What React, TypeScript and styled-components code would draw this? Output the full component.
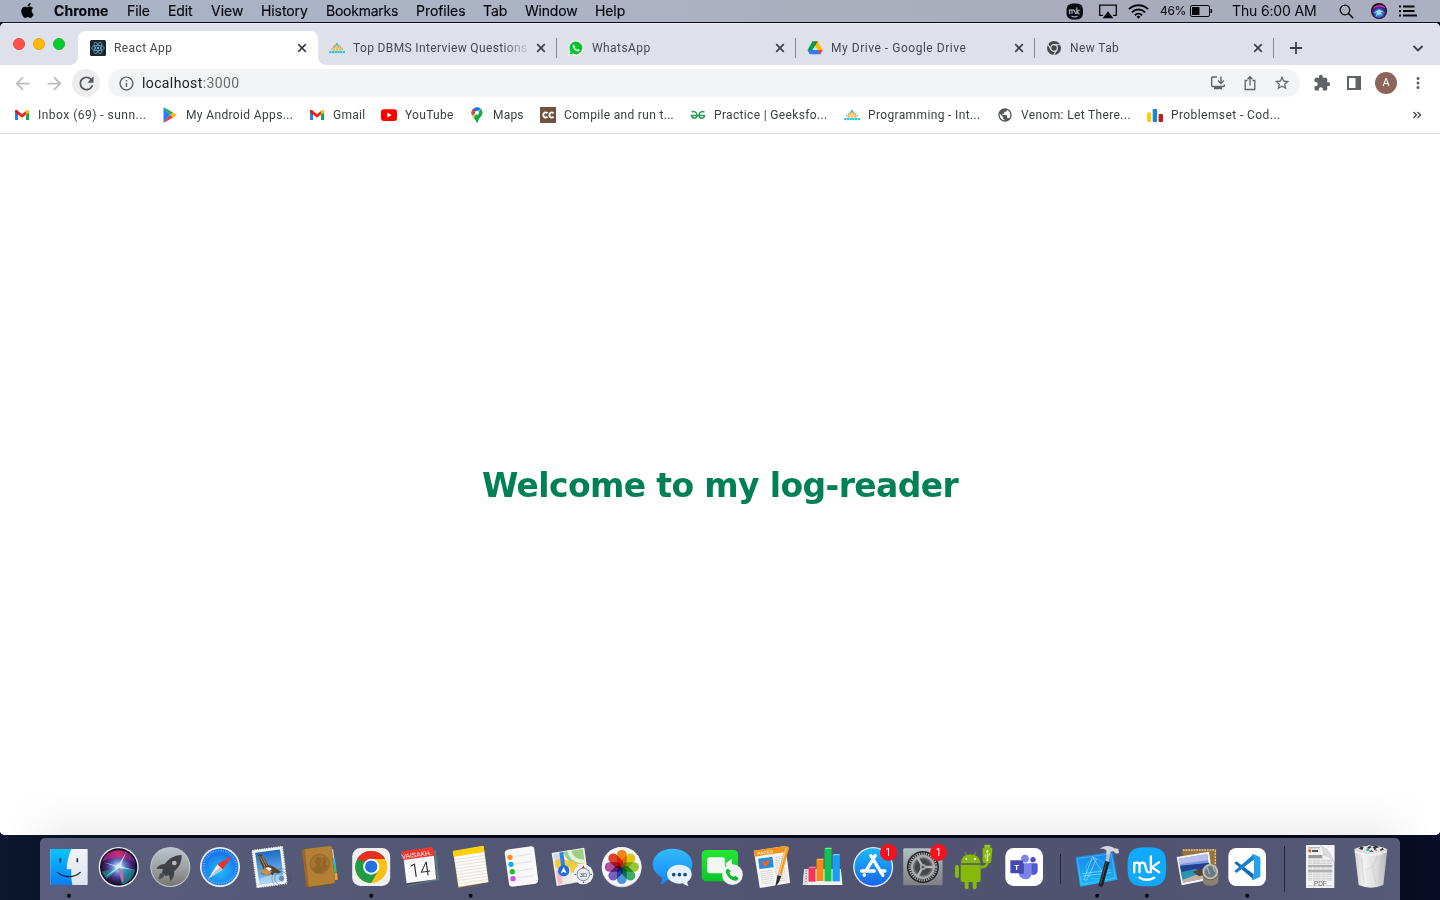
import React from "react";
import styled, { createGlobalStyle } from "styled-components";
import {
  MdArrowBack,
  MdArrowForward,
  MdRefresh,
  MdInfoOutline,
  MdExtension,
  MdStarBorder,
  MdMoreVert,
  MdPublic,
} from "react-icons/md";
import { FaApple } from "react-icons/fa";

const GlobalStyle = createGlobalStyle`
  * { box-sizing: border-box; }
  body { margin: 0; background: #070d1f; overflow: hidden; }
`;

const uiFont = `Roboto, "Liberation Sans", sans-serif`;
const menuFont = `Inter, "Liberation Sans", sans-serif`;

const Desktop = styled.div`
  width: 1440px;
  height: 900px;
  display: flex;
  flex-direction: column;
  background: linear-gradient(90deg, #0c1830 0, #050a1a 10%, #050a18 90%, #070d26 100%);
`;

/* ---------- menu bar ---------- */

const MenuBar = styled.header`
  flex: none;
  height: 22px;
  margin-bottom: 1px;
  display: flex;
  align-items: center;
  padding-left: 20px;
  background: linear-gradient(90deg, #a9b2c5 0%, #abb3c5 40%, #abafbd 60%, #a8acba 80%, #abb1c2 100%);
  font-family: ${menuFont};
  font-size: 14px;
  line-height: 22px;
  color: #05070c;
  white-space: nowrap;
`;

const AppleMark = styled.span`
  width: 34px;
  height: 22px;
  display: flex;
  align-items: center;
  svg { width: 15px; height: 17px; margin-top: -2px; }
`;

const MenuItem = styled.span<{ $w: number; $bold?: boolean; $ls?: number }>`
  width: ${(p) => p.$w}px;
  font-weight: ${(p) => (p.$bold ? 700 : 400)};
  letter-spacing: ${(p) => p.$ls ?? -0.1}px;
  -webkit-text-stroke: 0.15px #05070c;
`;

const StatusArea = styled.div`
  margin-left: auto;
  width: 374px;
  height: 22px;
  display: flex;
  align-items: center;
`;

const StatusSlot = styled.span<{ $w: number; $size?: number; $ls?: number }>`
  width: ${(p) => p.$w}px;
  height: 22px;
  display: flex;
  align-items: center;
  font-size: ${(p) => p.$size ?? 14}px;
  letter-spacing: ${(p) => p.$ls ?? 0}px;
  svg { flex: none; display: block; }
`;

/* ---------- browser window ---------- */

const Window = styled.section`
  flex: none;
  height: 812px;
  display: flex;
  flex-direction: column;
  border-radius: 5px;
  overflow: hidden;
  background: #fff;
  font-family: ${uiFont};
`;

const TabStrip = styled.div`
  height: 42px;
  flex: none;
  display: flex;
  align-items: flex-end;
  background: #dee1e9;
  box-shadow: inset 0 1px #eceef3;
`;

const Lights = styled.div`
  width: 78px;
  height: 42px;
  padding-left: 13px;
  display: flex;
  gap: 8px;
  align-items: center;
`;

const Light = styled.i<{ $c: string; $b: string }>`
  width: 12px;
  height: 12px;
  border-radius: 50%;
  background: ${(p) => p.$c};
  border: 1px solid ${(p) => p.$b};
`;

const Tab = styled.div<{ $active?: boolean }>`
  position: relative;
  width: ${(p) => (p.$active ? 240 : 239)}px;
  margin-right: ${(p) => (p.$active ? -1 : 0)}px;
  height: 34px;
  padding-left: 12px;
  display: flex;
  align-items: center;
  gap: 8px;
  color: #45494d;
  font-size: 12px;
  border-radius: 8px 8px 0 0;
  background: ${(p) => (p.$active ? "#fff" : "transparent")};

  &::before,
  &::after {
    content: "";
    position: absolute;
    bottom: 0;
    width: 8px;
    height: 8px;
    display: ${(p) => (p.$active ? "block" : "none")};
  }
  &::before { left: -8px; background: radial-gradient(circle at 0 0, transparent 7.5px, #fff 8.2px); }
  &::after { right: -8px; background: radial-gradient(circle at 100% 0, transparent 7.5px, #fff 8.2px); }
  > svg { width: 16px; height: 16px; flex: none; }
`;

const TabTitle = styled.span<{ $fade?: boolean; $ls: number }>`
  width: 174px;
  overflow: hidden;
  white-space: nowrap;
  letter-spacing: ${(p) => p.$ls}px;
  line-height: 16px;
  ${(p) => p.$fade && "mask-image: linear-gradient(90deg, #000 150px, transparent 178px);"}
`;

const TabClose = styled.span`
  width: 14px;
  height: 14px;
  margin-left: -1px;
  color: #3c4043;
  svg { width: 14px; height: 14px; display: block; }
`;

const TabDivider = styled.i`
  width: 1px;
  height: 20px;
  margin: 8px -1px 0 0;
  align-self: center;
  background: #85888d;
`;

const StripButton = styled.span<{ $ml: number; $s: number }>`
  height: 34px;
  margin-left: ${(p) => p.$ml}px;
  display: flex;
  align-items: center;
  color: #3c4043;
  svg { width: ${(p) => p.$s}px; height: ${(p) => p.$s}px; }
`;

const Toolbar = styled.div`
  height: 36px;
  flex: none;
  display: flex;
  align-items: center;
  padding-left: 8px;
`;

const NavButton = styled.span<{ $on?: boolean }>`
  width: 28px;
  height: 28px;
  margin-right: 4px;
  border-radius: 50%;
  display: flex;
  align-items: center;
  justify-content: center;
  color: ${(p) => (p.$on ? "#54585d" : "#babcbe")};
  background: ${(p) => (p.$on ? "#ededee" : "none")};
  svg { width: 21px; height: 21px; }
`;

const Omnibox = styled.div`
  width: 1192px;
  height: 28px;
  margin-left: 4px;
  padding: 0 10px;
  border-radius: 14px;
  background: #f1f3f4;
  display: flex;
  align-items: center;
  color: #5f6368;
  > svg { width: 17px; height: 17px; flex: none; }
`;

const Url = styled.span`
  flex: 1;
  margin-left: 7px;
  font-family: ${uiFont};
  font-size: 14px;
  letter-spacing: 0.38px;
  color: #6a6e73;
  b { font-weight: 400; color: #202124; }
`;

const OmniIcons = styled.span`
  display: flex;
  gap: 16px;
  svg { width: 16px; height: 16px; display: block; }
  svg:last-child { transform: scale(1.08); }
`;

const ToolIcons = styled.div`
  display: flex;
  align-items: center;
  margin-left: 13px;
  color: #5f6368;
  svg { width: 18px; height: 18px; display: block; }
  svg + svg { margin-left: 14px; }
`;

const Avatar = styled.span`
  width: 22px;
  height: 22px;
  margin: 0 12px 0 12px;
  border-radius: 50%;
  background: #8d6558;
  color: #fff;
  font-size: 11px;
  line-height: 22px;
  text-align: center;
`;

const Bookmarks = styled.nav`
  height: 33px;
  flex: none;
  display: flex;
  padding: 6px 18px 0 14px;
  border-bottom: 1px solid #dadce0;
  color: #3c4043;
`;

const Bookmark = styled.span<{ $w: number; $ls: number }>`
  width: ${(p) => p.$w}px;
  height: 16px;
  display: flex;
  align-items: center;
  gap: 8px;
  font-size: 12px;
  white-space: nowrap;
  letter-spacing: ${(p) => p.$ls}px;
  svg { width: 16px; height: 16px; flex: none; }
`;

const Overflow = styled.span`
  margin-left: auto;
  height: 16px;
  svg { display: block; width: 10px; height: 16px; }
`;

const Page = styled.main`
  flex: 1;
  display: flex;
  align-items: center;
  justify-content: center;
  padding-top: 2px;
  background:
    linear-gradient(90deg, #fff 10px, rgba(255, 255, 255, 0) 70px, rgba(255, 255, 255, 0) calc(100% - 70px), #fff calc(100% - 10px)),
    linear-gradient(180deg, #fff calc(100% - 45px), #f9f9f9 calc(100% - 20px), #f0f0f0 100%);
`;

const Heading = styled.h1`
  margin: 0;
  font-family: "DejaVu Sans", Verdana, sans-serif;
  font-weight: 700;
  font-size: 33px;
  line-height: 40px;
  letter-spacing: -0.63px;
  color: #008055;
  white-space: nowrap;
`;

/* ---------- dock ---------- */

const Dock = styled.footer`
  flex: none;
  width: 1360px;
  height: 62px;
  margin: 3px auto 0;
  padding: 0 4px;
  display: flex;
  border-radius: 5px 5px 0 0;
  background: linear-gradient(90deg, #585e7b 0%, #535975 25%, #505470 55%, #4f5370 80%, #565b78 100%);
`;

const DockSlot = styled.span`
  position: relative;
  width: 50.3px;
  height: 62px;
  flex: none;
  svg { display: block; width: 50.3px; height: 62px; overflow: visible; }
`;

const DockRule = styled.span<{ $top: number; $h: number; $ml: number }>`
  width: 22px;
  flex: none;
  &::after {
    content: "";
    display: block;
    width: 1px;
    height: ${(p) => p.$h}px;
    margin: ${(p) => p.$top}px 0 0 ${(p) => p.$ml}px;
    background: #23273c;
  }
`;

const Badge = styled.b`
  position: absolute;
  left: 31px;
  top: 6px;
  width: 17px;
  height: 17px;
  border-radius: 50%;
  background: #f5121d;
  color: #fff;
  font: 400 10.5px/17px ${uiFont};
  text-align: center;
`;

/* ---------- small brand icons ---------- */

const CloseIcon = () => (
  <svg viewBox="0 0 14 14">
    <path d="M3.200 3.200l7.600 7.600M10.800 3.200l-7.600 7.600" stroke="currentColor" strokeWidth="1.700" />
  </svg>
);

const ReactIcon = () => (
  <svg viewBox="0 0 16 16">
    <rect width="16" height="16" rx="1.5" fill="#20232a" />
    <g fill="none" stroke="#4fb6d0" strokeWidth="0.8">
      <ellipse cx="8" cy="8" rx="6.4" ry="2.6" />
      <ellipse cx="8" cy="8" rx="6.4" ry="2.6" transform="rotate(60 8 8)" />
      <ellipse cx="8" cy="8" rx="6.4" ry="2.6" transform="rotate(120 8 8)" />
    </g>
    <circle cx="8" cy="8" r="1.3" fill="#4fb6d0" />
  </svg>
);

const PyramidIcon = () => (
  <svg viewBox="0 0 16 16">
    <g fill="#8d9296">
      <rect x="7.2" y="3" width="1.4" height="1.4" />
      <rect x="5.4" y="4.6" width="1.3" height="1.3" /><rect x="9.2" y="4.6" width="1.3" height="1.3" />
      <rect x="3.8" y="6.4" width="1.3" height="1.3" /><rect x="11" y="6.4" width="1.3" height="1.3" />
      <rect x="2.2" y="8.4" width="1.3" height="1.3" /><rect x="12.6" y="8.4" width="1.3" height="1.3" />
    </g>
    <g fill="#f9b42c">
      <rect x="5.2" y="5.8" width="2.3" height="2.2" /><rect x="8.4" y="5.8" width="2.3" height="2.2" />
      <rect x="3.8" y="8.4" width="2.3" height="2.2" /><rect x="6.9" y="8.4" width="2.3" height="2.2" /><rect x="10" y="8.4" width="2.3" height="2.2" />
    </g>
    <g fill="#19cbe0">
      <rect x="6.9" y="3.8" width="2.1" height="1.8" />
      <rect x="0.2" y="11" width="2.2" height="2.1" /><rect x="2.900" y="11" width="2.2" height="2.1" /><rect x="5.7" y="11" width="2.2" height="2.1" />
      <rect x="8.4" y="11" width="2.2" height="2.1" /><rect x="11.1" y="11" width="2.2" height="2.1" /><rect x="13.8" y="11" width="2.2" height="2.1" />
    </g>
  </svg>
);

const WhatsIcon = () => (
  <svg viewBox="0 0 16 16">
    <path d="M8 .4a7.6 7.6 0 0 0-6.6 11.3L.3 15.8l4.2-1.1A7.6 7.6 0 1 0 8 .4z" fill="#fff" />
    <path d="M8 1.4a6.5 6.5 0 0 0-5.5 10l-.8 3 3-.8A6.5 6.5 0 1 0 8 1.4z" fill="#00c62e" />
    <path d="M5.6 4.4c-.9.3-1.2 1.400-.9 2.300.8 2.300 2.400 3.900 4.700 4.600 1 .3 2-.1 2.200-1.200l-1.700-1.100-1 .8c-1-.4-1.800-1.200-2.200-2.200l.7-.9z" fill="#fff" />
  </svg>
);

const DriveIcon = () => (
  <svg viewBox="0 0 16 16">
    <path d="M5.300 1.500h5.400L5.500 10.300 3 14.200.6 10z" fill="#00a14c" />
    <path d="M5.300 1.500h5.400l-2.700 4.500z" fill="#12833a" />
    <path d="M5.300 1.500h5.400l4.900 8.500h-5.100z" fill="#ffba00" />
    <path d="M.6 10h15l-2.500 4.200H3z" fill="#2f7cf6" />
    <path d="M10.500 10h5.100l-2.500 4.200z" fill="#ea4335" />
    <path d="M5.300 1.500h5.400L8 6z" fill="#0c9443" />
    <path d="M8 6l2.500 4h-5z" fill="#dee1e9" />
  </svg>
);

const GreyChromeIcon = () => (
  <svg viewBox="0 0 16 16">
    <circle cx="8" cy="8" r="7" fill="#45484c" />
    <circle cx="8" cy="8" r="3.300" fill="none" stroke="#dee1e9" strokeWidth="1.200" />
    <path d="M8 4.700h6.500M5.100 9.700L1.900 4.200M10.900 9.700l-3.300 5.500" stroke="#dee1e9" strokeWidth="1.100" />
  </svg>
);

const GmailIcon = () => (
  <svg viewBox="0 0 16 16">
    <path d="M1 4.500v8.400h3V7.200z" fill="#2f7cf6" />
    <path d="M15 4.500v8.400h-3V7.200z" fill="#17a84b" />
    <path d="M12 4l1.300-.9C14.200 2.600 15 3.200 15 4.300v1.200l-3 2.300z" fill="#fbbc04" />
    <path d="M1 5.500V4.300c0-1.100.8-1.700 1.700-1.200L8 7l4-3v3.800l-4 3-4-3z" fill="#ea2c20" />
    <path d="M1 5.500V4.300c0-1 .9-1.700 1.700-1.200L4 4v3.800z" fill="#c5221f" />
  </svg>
);

const PlayIcon = () => (
  <svg viewBox="0 0 16 16">
    <path d="M1.500.8v14.400L8.300 8z" fill="#2f7cf6" />
    <path d="M1.500.8c.3-.3.800-.3 1.300 0L11 5.500 8.300 8z" fill="#17b358" />
    <path d="M1.500 15.200c.3.300.800.3 1.300 0L11 10.500 8.300 8z" fill="#ea3b35" />
    <path d="M11 5.500l3.300 1.900c.5.300.5.900 0 1.200L11 10.500 8.300 8z" fill="#fbbc04" />
  </svg>
);

const YouTubeIcon = () => (
  <svg viewBox="0 0 16 16">
    <rect x="0" y="2.300" width="16" height="11.600" rx="2.800" fill="#f00" />
    <path d="M6.300 5.500v5l4.400-2.500z" fill="#fff" />
  </svg>
);

const MapPinIcon = () => (
  <svg viewBox="0 0 16 16">
    <path d="M8 .3a5.500 5.500 0 0 0-5.500 5.500c0 1.200.3 2 .800 3L11.800 1.700A5.400 5.400 0 0 0 8 .3z" fill="#1a73e8" />
    <path d="M3.800 2.300L6.300 4.600 3 8.200a5.500 5.500 0 0 1 .800-5.900z" fill="#ea4335" />
    <path d="M11.800 1.700l-3 2.700 1.300 3L4.600 11c-.5-.700-1-1.400-1.300-2.100z" fill="#fbbc04" />
    <path d="M11.800 1.700c1.100 1 1.700 2.500 1.700 4.100 0 3.600-3.700 4.700-4.500 9.100-.2 1-1.500 1-1.700 0-.5-1.900-1.600-2.700-2.600-4z" fill="#17a84b" />
    <circle cx="8" cy="5.700" r="2" fill="#fff" />
  </svg>
);

const ChefIcon = () => (
  <svg viewBox="0 0 16 16">
    <rect width="16" height="16" fill="#70523e" />
    <g fill="none" stroke="#fff" strokeWidth="1.900">
      <path d="M7.500 6.200C5.600 4.600 3.300 5.500 3.300 8s2.300 3.300 4.200 1.800" />
      <path d="M13.600 6.200C11.700 4.600 9.400 5.500 9.400 8s2.300 3.300 4.200 1.800" />
    </g>
  </svg>
);

const GeeksIcon = () => (
  <svg viewBox="0 0 16 16">
    <g fill="none" stroke="#2f9b55" strokeWidth="1.500">
      <path d="M1.600 5.200C3.500 3.800 7 4.800 7 8.200c0 3.800-5 4-5.700.2h13.500" />
      <path d="M14.400 5.200C12.500 3.800 9 4.800 9 8.200c0 3.800 5 4 5.700.2" />
    </g>
  </svg>
);

const ForcesIcon = () => (
  <svg viewBox="0 0 16 16">
    <rect x="0" y="5.500" width="4.300" height="9.500" rx="1" fill="#fbcb1c" />
    <rect x="5.700" y="2" width="4.400" height="13" rx="1" fill="#1688d4" />
    <rect x="11.600" y="7" width="4.400" height="8" rx="1" fill="#c01f1f" />
  </svg>
);

const SiriDot = () => (
  <svg width="16" height="16" viewBox="0 0 16 16">
    <defs>
      <radialGradient id="siriSmall" cx=".5" cy=".65" r=".6">
        <stop offset="0" stopColor="#bdeeff" /><stop offset=".25" stopColor="#3d9fe0" />
        <stop offset=".6" stopColor="#41309c" /><stop offset="1" stopColor="#140a2c" />
      </radialGradient>
    </defs>
    <circle cx="8" cy="8" r="8" fill="#0b0a1c" />
    <circle cx="8" cy="8" r="7.300" fill="url(#siriSmall)" />
    <path d="M2 6.500c1-6 11-6 12-1-3-2-9-2.500-12 1z" fill="#c32b9c" />
    <path d="M2 10l6-3.500 6 3-4.500-.7 2 4.500L8 9.500 5 14l1-4.800z" fill="#8fe0fa" />
  </svg>
);

/* ---------- dock artwork ---------- */

type Artwork = { ox: number; art: React.ReactNode; badge?: string };

const running = (cx: number) => <circle cx={cx} cy="212.500" r="6" fill="#06070b" />;

const petals = ["#f98a14", "#e3cd14", "#9ccb35", "#39b26f", "#4c9be0", "#7a62c4", "#b9529f", "#e8402f"];

const apps: Record<string, Artwork> = {
  finder: {
    ox: 42,
    art: (
      <>
        <defs>
          <linearGradient id="fL" x2="0" y2="1"><stop stopColor="#06c4fd" /><stop offset="1" stopColor="#0b7cf4" /></linearGradient>
          <linearGradient id="fR" x2="0" y2="1"><stop stopColor="#f2f5f9" /><stop offset="1" stopColor="#dbe4f0" /></linearGradient>
        </defs>
        <rect x="61" y="72" width="112" height="108" rx="3" fill="url(#fR)" />
        <path d="M64 72h60c-8 18-13 38-14 61h14c-1 16 0 32 3 47H64q-3 0-3-3V75q0-3 3-3z" fill="url(#fL)" />
        <path d="M91 101v9M142 101v9" stroke="#10233a" strokeWidth="4.500" strokeLinecap="round" />
        <path d="M83 142c18 17 50 17 68 0" fill="none" stroke="#11263c" strokeWidth="3.500" strokeLinecap="round" />
        {running(117)}
      </>
    ),
  },
  siri: {
    ox: 193,
    art: (
      <>
        <defs>
          <radialGradient id="siri"><stop stopColor="#fff" /><stop offset=".12" stopColor="#c9ecfb" /><stop offset=".35" stopColor="#6a7fd0" /><stop offset=".65" stopColor="#47307e" /><stop offset="1" stopColor="#150d26" /></radialGradient>
          <linearGradient id="siriPink" x2="1"><stop stopColor="#8a2390" /><stop offset=".5" stopColor="#f02c78" /><stop offset="1" stopColor="#5a2490" /></linearGradient>
        </defs>
        <circle cx="267" cy="126" r="60" fill="#eceef3" />
        <circle cx="267" cy="126" r="56" fill="#130d22" />
        <circle cx="267" cy="126" r="54" fill="url(#siri)" />
        <path d="M217 112c12-48 88-50 100 4-22-22-72-26-100-4z" fill="url(#siriPink)" opacity=".8" />
        <path d="M216 140l50-12 50 6c-6 30-24 42-40 44l-10-44-36 28z" fill="#14b5ac" opacity=".55" />
        <path d="M222 112l42 11 26-42-18 43 42 11-43-6-4 2-39 24 33-28z" fill="#d9f6ff" opacity=".75" />
        <path d="M269 128c12 16 16 34 10 46l-14-42z" fill="#ec5cb0" opacity=".9" />
      </>
    ),
  },
  launchpad: {
    ox: 344,
    art: (
      <>
        <defs><linearGradient id="lp" x2="0" y2="1"><stop stopColor="#b8c6ca" /><stop offset=".55" stopColor="#9b9fa3" /><stop offset="1" stopColor="#77756f" /></linearGradient></defs>
        <circle cx="420" cy="126" r="60" fill="#c2c8cc" />
        <circle cx="420" cy="126" r="57" fill="url(#lp)" />
        <path d="M454 90c-24 1-40 12-50 27-12 0-22 5-26 14l17 1 3 2c-2 4-3 7-3 9l11 10c4 0 7-1 10-3l4 18c10-8 13-18 11-29 15-11 23-26 23-49z" fill="#3f4347" />
        <path d="M396 143c-7 2-11 10-11 19 9-1 16-5 18-13z" fill="#4b4e50" />
        <circle cx="432" cy="114" r="7" fill="#b3bbbf" />
      </>
    ),
  },
  safari: {
    ox: 495,
    art: (
      <>
        <defs><radialGradient id="saf" cx=".5" cy=".6"><stop stopColor="#22c1fb" /><stop offset="1" stopColor="#1773ec" /></radialGradient></defs>
        <circle cx="570" cy="126" r="60" fill="#eceef2" />
        <circle cx="570" cy="126" r="55" fill="url(#saf)" />
        <circle cx="570" cy="126" r="49" fill="none" stroke="#d2efff" strokeWidth="6" strokeDasharray="1.200 3.900" opacity=".75" />
        <path d="M605 92l-43 26 16 16z" fill="#f22f2c" />
        <path d="M535 161l27-43 16 16z" fill="#eef0f3" />
        <path d="M535 161l43-27-8-8z" fill="#b9c0ca" />
      </>
    ),
  },
  mail: {
    ox: 645.6,
    art: (
      <>
        <defs><linearGradient id="ml" x2="0" y2="1"><stop stopColor="#1c6dc6" /><stop offset="1" stopColor="#8dc9f4" /></linearGradient></defs>
        <g transform="rotate(-7.500 721 126)">
          <rect x="674" y="70" width="91" height="112" fill="#f3f3f1" />
          <rect x="674" y="70" width="91" height="112" fill="none" stroke="#f3f3f1" strokeWidth="4" strokeDasharray="4 3" />
          <rect x="682" y="78" width="75" height="96" fill="url(#ml)" />
          <path d="M682 160q30-16 75-4v18h-75z" fill="#c2e1f7" opacity=".6" />
        </g>
        <path d="M684 90c8-6 15 0 20 11l11 19c8 2 16 4 22 9l17 12-7 4-14-2c0 6-6 8-11 4-8 6-20 5-29-2 5-4 9-10 6-18-6-12-10-24-15-37z" fill="#5b3f28" />
        <path d="M688 94c6 6 12 18 18 32l-4 12M696 93c6 8 10 20 16 30" fill="none" stroke="#b08a5c" strokeWidth="3" />
        <path d="M690 138c10-8 28-6 36 2l-6 8c-10 4-22 2-30-10z" fill="#c39450" />
        <path d="M706 130c6-6 16-4 20 2l-6 6z" fill="#fff" />
        <circle cx="755" cy="160" r="29" fill="none" stroke="#343a50" strokeWidth="2" opacity=".45" />
        <circle cx="755" cy="160" r="20" fill="none" stroke="#343a50" strokeWidth="3" opacity=".4" />
        <circle cx="755" cy="160" r="8" fill="#25477e" opacity=".5" />
      </>
    ),
  },
  contacts: {
    ox: 1.5,
    art: (
      <>
        <path d="M106 74l10-1 3 26-10 1z" fill="#d8dbde" /><path d="M110 99l11-1 3 22-11 1z" fill="#39b7e8" />
        <path d="M113 121l11-1 3 23-11 1z" fill="#2fc46b" /><path d="M116 145l12-1 2 20-12 2z" fill="#f0a02b" />
        <path d="M30 72l77-8q4 0 5 4l10 104q0 4-4 5l-76 12q-5 0-6-4L23 80q1-7 7-8z" fill="#7b5222" />
        <path d="M30 72l77-9q4 0 5 4l9 103q0 4-4 5l-72 10q-5 0-6-4L23 80q1-7 7-8z" fill="#b38036" />
        <path d="M23 80q1-7 8-8l12 115q-7 0-8-5z" fill="#976826" />
        <circle cx="76" cy="117" r="29" fill="#a67533" stroke="#8a5d22" strokeWidth="2" />
        <path d="M53 134c4-10 12-8 13-13-8-16-3-24 5-25 10 0 13 10 6 24 1 6 11 4 15 14-10 14-30 14-39 0zM84 97c10-2 16 8 9 20 1 4 6 4 8 8l-9 10c-2-8-11-8-12-14 5-10 6-16 4-24z" fill="#936628" />
      </>
    ),
  },
  chrome: {
    ox: 152.4,
    art: (
      <>
        <rect x="171" y="69" width="114" height="114" rx="25" fill="#f0f1f2" />
        <circle cx="228" cy="126" r="48" fill="#fbc116" />
        <path d="M228 126L186.400 102A48 48 0 0 1 269.600 102z" fill="#e3301f" />
        <path d="M186.400 102A48 48 0 0 0 228 174L249 137 228 126z" fill="#1f9c45" />
        <path d="M228 102h41.600a48 48 0 0 1 6.400 24l-20 8z" fill="#fbc116" />
        <path d="M186.400 102L207 138l10-30z" fill="#1f9c45" />
        <path d="M186.400 102A48 48 0 0 1 269.600 102H228l-18 10z" fill="#e3301f" />
        <circle cx="228" cy="125" r="24" fill="#fff" /><circle cx="228" cy="125" r="18.500" fill="#2070e6" />
        {running(228)}
      </>
    ),
  },
  calendar: {
    ox: 303.3,
    art: (
      <>
        <path d="M418 76l5-1 11 91-97 18-2-6z" fill="#5d7680" />
        <path d="M326 93l91-10 9 79-90 18z" fill="#3d4447" />
        <path d="M325 92l91-11 8 82-89 12z" fill="#fafafa" />
        <path d="M319 79l91-13q3 0 4 4l5 22-95 13q0-12-5-26z" fill="#ee3630" />
        <text x="321" y="102" transform="rotate(-8 321 102)" fontFamily="Liberation Sans, sans-serif" fontSize="19" textLength="91" lengthAdjust="spacingAndGlyphs" fill="#fff">VAISAKH.</text>
        <text x="347" y="158" transform="rotate(-8 347 158)" fontFamily="Roboto, Liberation Sans, sans-serif" fontWeight="300" fontSize="57" textLength="62" lengthAdjust="spacingAndGlyphs" fill="#222">14</text>
      </>
    ),
  },
  notes: {
    ox: 454,
    art: (
      <>
        <path d="M475 80l92-17 15 109-91 16z" fill="#c8a23a" />
        <path d="M476 82l91-16 14 105-89 14z" fill="#faf9f6" />
        <path d="M474 80q0-2 3-3l87-15q3 0 3 3l2 16-92 14z" fill="#fdd106" />
        <g stroke="#c9c8c4" strokeWidth="1.300">
          {[0, 1, 2, 3, 4, 5, 6, 7, 8].map((i) => (
            <path key={i} d={`M${480 + i * 1.3} ${104 + i * 9}l${90} -13`} />
          ))}
        </g>
        {running(528)}
      </>
    ),
  },
  reminders: {
    ox: 605,
    art: (
      <>
        <path d="M636 76l72-10q8-1 10 8l13 94q0 8-7 10l-72 9q-9 0-10-8l-12-93q0-8 6-10z" fill="#35394b" opacity=".6" />
        <path d="M636 74l72-10q8-1 9 8l12 94q0 8-7 10l-71 9q-9 0-10-8l-13-93q0-8 8-10z" fill="#f8f8f8" />
        <g stroke="#cfcfcf" strokeWidth="1.500"><path d="M658 94l50-7M661 116l50-7M664 138l50-7M667 159l48-7" /></g>
        <circle cx="644" cy="97" r="8" fill="#ff8d17" /><circle cx="647" cy="118" r="8" fill="#1ba5fb" />
        <circle cx="651" cy="140" r="8" fill="#1fc42c" /><circle cx="653" cy="161" r="8" fill="#c951e0" />
      </>
    ),
  },
  maps: {
    ox: 6,
    art: (
      <>
        <path d="M20 84l98-16 13 98-96 17z" fill="#f3f1ea" />
        <path d="M54 81l60-9 5 43c-30 8-54-6-65-34z" fill="#9cd183" />
        <path d="M72 76c6 24 22 34 47 34" fill="none" stroke="#e9f3dc" strokeWidth="11" />
        <path d="M26 88l24-5 6 36-25 3z" fill="#d4d8da" /><path d="M29 109l17-9 50 14 24 40-88-24z" fill="#f7c62f" opacity=".9" />
        <path d="M31 132l44-4 10 46-46 6z" fill="#ecebe6" /><path d="M33 136l16 2 4 38-14 2z" fill="#f3b9c8" />
        <path d="M49 82l7 52" stroke="#2d83e6" strokeWidth="12" />
        <circle cx="56" cy="137" r="17" fill="#1e6fdc" /><path d="M56 126l9 19-9-4-9 4z" fill="#fff" />
        <circle cx="115" cy="148" r="30" fill="#f2f3f4" /><circle cx="115" cy="148" r="19" fill="#e4e8ea" stroke="#6b91a8" strokeWidth="3" />
        <path d="M111 130l4-9 4 9z" fill="#e22" /><path d="M93 148h-4M141 148h-4M115 170v4" stroke="#333" strokeWidth="3" />
        <text x="104" y="155" fontFamily="Liberation Sans, sans-serif" fontSize="18" fill="#4d5256">3D</text>
      </>
    ),
  },
  photos: {
    ox: 157,
    art: (
      <>
        <circle cx="231" cy="127" r="60" fill="#d0d1d5" /><circle cx="231" cy="125" r="59" fill="#f6f6f6" />
        {petals.map((c, i) => (
          <rect key={c} x="217" y="75" width="29" height="50" rx="14" fill={c} style={{ mixBlendMode: "multiply" }} transform={`rotate(${i * 45} 231.500 126)`} />
        ))}
      </>
    ),
  },
  messages: {
    ox: 307.8,
    art: (
      <>
        <defs><linearGradient id="msg" x2="0" y2="1"><stop stopColor="#32bcfb" /><stop offset="1" stopColor="#1583f7" /></linearGradient></defs>
        <path d="M381 71c34 0 60 20 60 47s-26 48-60 48c-5 0-10 0-15-1-6 8-13 12-23 13 5-5 8-12 7-20-17-9-28-23-28-40 0-27 26-47 59-47z" fill="url(#msg)" />
        <path d="M402 119c21 0 37 12 37 29 0 9-5 17-13 22 0 5 1 9 4 13-8-1-14-4-17-8l-11 1c-21 0-37-12-37-28s16-29 37-29z" fill="#e7f2fc" />
        <circle cx="385" cy="149" r="5.500" fill="#174a8a" /><circle cx="402" cy="149" r="5.500" fill="#174a8a" /><circle cx="419" cy="149" r="5.500" fill="#174a8a" />
      </>
    ),
  },
  facetime: {
    ox: 458.7,
    art: (
      <>
        <defs><linearGradient id="ft" x2="0" y2="1"><stop stopColor="#27e636" /><stop offset="1" stopColor="#0cc528" /></linearGradient></defs>
        <rect x="470" y="75" width="109" height="94" rx="13" fill="url(#ft)" />
        <rect x="486" y="97" width="54" height="48" rx="10" fill="#f3f7f3" /><path d="M543 115l17-14v38l-17-12z" fill="#f3f7f3" />
        <circle cx="562" cy="149" r="31" fill="#f2f4f2" />
        <path d="M548 131c-7 3-7 10-3 17 6 12 15 19 27 19 5 0 8-4 8-8l-9-7-6 4c-6-3-10-7-12-13l4-5z" fill="#12ba31" />
      </>
    ),
  },
  pages: {
    ox: 609.6,
    art: (
      <>
        <path d="M627 77l95-14 14 111-91 15z" fill="#f5f5f3" />
        <path d="M627 77l95-14 3 18-95 14z" fill="#f4911d" />
        <text x="638" y="91" transform="rotate(-8 638 91)" fontFamily="Liberation Sans, sans-serif" fontWeight="700" fontSize="14" fill="#ffe0b0">PAGES</text>
        <path d="M640 101l43-6 4 32-43 5z" fill="#278de4" /><path d="M650 112l8-5 4 4 6-6 9 2-8 10-8 11z" fill="#e2672a" />
        <g stroke="#b5b5b8" strokeWidth="1.500" strokeDasharray="7 1.500">
          {[0, 1, 2, 3, 4, 5, 6].map((i) => <path key={i} d={`M${646 + i} ${141 + i * 6}l36-5M${690 + i * 0.5} ${98 + i * 5}l26-4M${689 + i} ${133 + i * 6}l34-5`} />)}
        </g>
        <path d="M722 66q7-5 11 3l-24 86-11-3z" fill="#f29a22" /><path d="M724 68l-22 84" stroke="#ffd58a" strokeWidth="3" />
        <path d="M698 151l11 3-6 17-12 16z" fill="#2d2c30" /><path d="M699 147l11 3" stroke="#c8c9cc" strokeWidth="4" />
      </>
    ),
  },
  numbers: {
    ox: 10.5,
    art: (
      <>
        <path d="M29 132h110l5 48H25z" fill="#f1f1f1" /><path d="M29 132h12l-2 48H25z" fill="#dcdcdc" />
        <path d="M35 136v40" stroke="#777" strokeWidth="4" strokeDasharray="3 5" />
        <rect x="42" y="128" width="21" height="42" fill="#f23558" /><path d="M42 129l4-4h19l-2 4z" fill="#ff8496" />
        <rect x="66" y="104" width="21" height="64" fill="#f88b16" /><path d="M66 104l3-3h19l-2 4z" fill="#ffc268" />
        <rect x="90" y="71" width="21" height="98" fill="#12c250" /><path d="M90 72l3-4h18v4z" fill="#76e796" />
        <rect x="114" y="90" width="22" height="79" fill="#1a9df2" /><path d="M114 91l3-4h18v4z" fill="#79d0ff" />
      </>
    ),
  },
  appstore: {
    ox: 161.4,
    badge: "1",
    art: (
      <>
        <defs><linearGradient id="as" x2="0" y2="1"><stop stopColor="#1cb8fb" /><stop offset="1" stopColor="#1866ec" /></linearGradient></defs>
        <circle cx="234" cy="126" r="60" fill="#e5ebf3" /><circle cx="234" cy="126" r="56" fill="url(#as)" />
        <g stroke="#fff" strokeWidth="10" strokeLinecap="round"><path d="M240 92l-28 46M227 92l36 59M199 138h38M257 138h12M207 151l1-2" /></g>
      </>
    ),
  },
  settings: {
    ox: 312.3,
    badge: "1",
    art: (
      <>
        <defs><linearGradient id="sp" x2="0" y2="1"><stop stopColor="#b0bfc6" /><stop offset="1" stopColor="#7f8081" /></linearGradient></defs>
        <rect x="325" y="70" width="118" height="111" rx="4" fill="url(#sp)" />
        <circle cx="384" cy="126" r="48" fill="#25272a" />
        <circle cx="384" cy="126" r="40" fill="none" stroke="#a4a7a9" strokeWidth="7" strokeDasharray="4 3" />
        <circle cx="384" cy="126" r="33" fill="#66696c" stroke="#a9acae" strokeWidth="7" />
        <circle cx="384" cy="126" r="24" fill="#43464a" />
        <path d="M384 126h32M384 126l-16-28M384 126l-16 28" stroke="#b4b6b7" strokeWidth="7" /><circle cx="384" cy="126" r="9" fill="#a4a7a8" /><circle cx="384" cy="126" r="4" fill="#53565a" />
      </>
    ),
  },
  android: {
    ox: 463,
    art: (
      <>
        <g fill="#86b909">
          <path d="M498 115q1-26 29-27 28 1 31 27z" /><path d="M498 119h60v46q0 6-6 6h-6v16q0 6-6 6t-6-6v-16h-12v16q0 6-6 6t-6-6v-16h-6q-6 0-6-6z" />
          <rect x="481" y="120" width="12" height="39" rx="6" />
          <path d="M569 59h18v9h4q2 0 2 4l-3 36q-1 6-6 6h-15q-5 0-5-6V72q0-4 3-4h2z" />
        </g>
        <path d="M558 126q19 2 20-14" fill="none" stroke="#86b909" strokeWidth="8" />
        <path d="M510 82l6 9M544 82l-6 9" stroke="#86b909" strokeWidth="3" />
        <circle cx="515" cy="102" r="3" fill="#fff" /><circle cx="541" cy="102" r="3" fill="#fff" />
        <path d="M578 76v30M578 101l-6-6v-7M578 96l6-6v-6M575 81l3-6 3 6" fill="none" stroke="#fff" strokeWidth="2" /><circle cx="578" cy="106" r="3" fill="#fff" />
        <path d="M574 61v4M582 61v4" stroke="#d4e7a4" strokeWidth="3" />
      </>
    ),
  },
  teams: {
    ox: 614,
    art: (
      <>
        <rect x="630" y="69" width="113" height="114" rx="25" fill="#fff" />
        <circle cx="713" cy="104" r="8" fill="#4b50bd" /><path d="M702 115h21q4 0 4 4v16q0 13-12 15-8 0-13-6z" fill="#5059c9" />
        <circle cx="689" cy="101" r="11.500" fill="#7b83eb" /><path d="M672 115h33q4 0 4 4v24q-1 19-19 20-17-1-20-19z" fill="#7b83eb" />
        <path d="M672 115h14v31h-15z" fill="#4a51ab" /><rect x="645" y="106" width="38" height="39" rx="3" fill="#4648b5" />
        <text x="664" y="134" textAnchor="middle" fontFamily="Liberation Sans, sans-serif" fontWeight="700" fontSize="24" fill="#fff">T</text>
      </>
    ),
  },
};

const recentApps: Record<string, Artwork> = {
  xcode: {
    ox: 80.5,
    art: (
      <>
        <defs><linearGradient id="xc" x2="0" y2="1"><stop stopColor="#1a85e8" /><stop offset="1" stopColor="#18b8f8" /></linearGradient></defs>
        <path d="M91 96l112-16 14 84-112 21z" fill="url(#xc)" /><path d="M96 101l102-15 12 73-101 19z" fill="none" stroke="#7fd0fc" strokeWidth="1.500" />
        <g fill="none" stroke="#9bdcff" strokeWidth="2"><path d="M142 96l-26 68 8 2 30-64zM142 96l42 63M112 146l84-11M114 153l84-10" /><circle cx="152" cy="132" r="30" strokeOpacity=".5" /></g>
        <path d="M163 72c14-12 32-11 44-2l12 1 3 13-10 2-7-7-9 1-2 10-11-2 1-11c-6-7-13-6-21-5z" fill="#d3d7d9" /><path d="M184 86l11 2-4 24-10-2z" fill="#b9bec1" />
        <path d="M180 108l13 3-19 71q-3 5-10 2-5-2-3-7z" fill="#202125" /><path d="M184 111l-18 66" stroke="#686b70" strokeWidth="2" />
        {running(156)}
      </>
    ),
  },
  mackeeper: {
    ox: 231.4,
    art: (
      <>
        <path d="M306 67c47 0 58 12 58 58s-11 59-58 59-58-13-58-59 11-58 58-58z" fill="#10a9fb" />
        <g fill="none" stroke="#fff" strokeWidth="7" strokeLinecap="round" strokeLinejoin="round">
          <path d="M268 142v-28M268 122c1-12 16-12 16 0v20M284 122c1-12 16-12 17 0l4 14q2 6 7 6" /><path d="M318 94v48M342 112l-21 15 22 15" /><path d="M284 158c14 8 30 8 44 0" />
        </g>
        {running(306)}
      </>
    ),
  },
  preview: {
    ox: 382,
    art: (
      <>
        <path d="M410 73h102v88H410z" fill="#99723a" /><path d="M412 75h98" stroke="#e6cf9a" strokeWidth="5" strokeDasharray="5 3" /><path d="M509 76v80" stroke="#e6cf9a" strokeWidth="4" strokeDasharray="5 4" />
        <path d="M393 96l97-16 12 82-94 19z" fill="#f5f5f5" />
        <path d="M399 101l86-14 9 70-82 16z" fill="#789ade" /><path d="M399 101l86-14 2 18-86 13z" fill="#b8bdea" />
        <path d="M403 122l87-9 3 21-85 14z" fill="#223f94" /><path d="M407 147l85-18 2 28-82 16z" fill="#c4b0a0" />
        <path d="M405 142l42-10 30 6-20 10-46 16z" fill="#2896b0" /><path d="M441 140l26-9 12 18-19 5z" fill="#55403c" />
        <path d="M472 145v28q10 12 34 8 10-4 12-10v-32z" fill="#8b8270" />
        <circle cx="494" cy="141" r="25" fill="#69645c" /><circle cx="494" cy="140" r="21" fill="#9aa0a0" stroke="#c8c7c0" strokeWidth="4" /><circle cx="494" cy="140" r="16" fill="#556773" opacity=".7" />
        <path d="M484 126l8 22M502 127l6 14" stroke="#b9c9d4" strokeWidth="4" opacity=".7" />
      </>
    ),
  },
  vscode: {
    ox: 533,
    art: (
      <>
        <rect x="549" y="69" width="113" height="114" rx="24" fill="#fff" />
        <path d="M567 114l6-5 52 38-1 16z" fill="#0f6db8" /><path d="M567 138l6 6 53-39-1-17z" fill="#1b82cf" />
        <path d="M624 87l18 8q3 2 3 5v52q0 3-3 5l-18 8q-3 1-4-2l5-9v-57l-5-8q2-3 4-2z" fill="#23a0ee" /><path d="M625 104l-27 22 27 21z" fill="#fff" />
        {running(606)}
      </>
    ),
  },
};

const stacks: Record<string, Artwork> = {
  pdf: {
    ox: 750,
    art: (
      <>
        <path d="M783 60h85v129h-85z" fill="#f2f2f2" />
        <g fill="#9a9a9a"><rect x="790" y="67" width="35" height="3" /><rect x="790" y="90" width="42" height="10" /><rect x="790" y="73" width="8" height="9" fill="#d8642a" /><rect x="801" y="75" width="18" height="6" fill="#555" /></g>
        <g stroke="#b4b4b4" strokeWidth="1.800" strokeDasharray="13 2 23 2">
          {[106, 111, 116, 128, 133, 143, 148, 154, 160, 165, 182].map((y) => <path key={y} d={`M789 ${y}h72`} />)}
        </g>
        <path d="M789 123h73M789 138h73" stroke="#555" strokeWidth="2.500" />
        <path d="M823 60c23 7 39 25 45 54-10-16-21-21-34-23 4-10 0-21-11-31z" fill="#dadada" stroke="#b5b5b5" />
        <path d="M824 61h44v52c-5-26-18-44-44-52z" fill="#f8f8f8" />
        <text x="807" y="182" fontFamily="Liberation Sans, sans-serif" fontSize="19" fill="#666">PDF</text>
      </>
    ),
  },
  trash: {
    ox: 901,
    art: (
      <>
        <defs><linearGradient id="tr"><stop stopColor="#d0d1d2" /><stop offset=".3" stopColor="#f1f1f1" /><stop offset=".7" stopColor="#d9d9d8" /><stop offset="1" stopColor="#b5b7bb" /></linearGradient></defs>
        <path d="M929 72q50-18 99 0l-12 108q-37 16-74 0z" fill="url(#tr)" />
        <ellipse cx="978" cy="75" rx="48" ry="12" fill="#dadada" />
        <path d="M943 71l6-8 14 2 10-5 12 6 12-5 14 8 4 7-16 5-24 3-25-5z" fill="#e3e6e6" />
        <path d="M943 71l6-8 8 3-4 9zM966 70l9-8 6 5-7 4zM984 66l12-5 8 6-9 2-4 8zM1006 74l8-6 3 6-10 4zM973 80l8-5 6 5z" fill="#2f3638" />
        <path d="M962 74l9-3 4 6-8 1z" fill="#29ae91" /><path d="M991 78l4-5 4 5z" fill="#bf6544" />
        <path d="M931 80q46 20 95 0" fill="none" stroke="#f8f8f8" strokeWidth="4" />
        <path d="M950 98l8 76M997 94l-13 34 10 48M1014 88l-13 90M965 135l20-12" stroke="#bebfc1" strokeWidth="3" opacity=".45" fill="none" />
      </>
    ),
  },
};

const DockGroup = ({ items }: { items: Record<string, Artwork> }) => (
  <>
    {Object.entries(items).map(([name, item]) => (
      <DockSlot key={name}>
        <svg viewBox={`${item.ox} 39 150.9 186`}>{item.art}</svg>
        {item.badge && <Badge>{item.badge}</Badge>}
      </DockSlot>
    ))}
  </>
);

const menus: [string, number, number?][] = [
  ["File", 41], ["Edit", 43], ["View", 50, 0], ["History", 65], ["Bookmarks", 90, -0.25],
  ["Profiles", 67, -0.05], ["Tab", 42], ["Window", 70, -0.2], ["Help", 40],
];

const bookmarks: [string, number, React.ReactNode, number][] = [
  ["Inbox (69) - sunn...", 148, <GmailIcon />, 0.48],
  ["My Android Apps...", 147, <PlayIcon />, 0.36],
  ["Gmail", 72, <GmailIcon />, 0.3],
  ["YouTube", 88, <YouTubeIcon />, 0.28],
  ["Maps", 71, <MapPinIcon />, 0.2],
  ["Compile and run t...", 150, <ChefIcon />, 0.32],
  ["Practice | Geeksfo...", 154, <GeeksIcon />, 0.34],
  ["Programming - Int...", 153, <PyramidIcon />, 0.36],
  ["Venom: Let There...", 150, <MdPublic color="#55585c" />, 0.36],
  ["Problemset - Cod...", 150, <ForcesIcon />, 0.42],
];

const tabs: [string, React.ReactNode, number][] = [
  ["React App", <ReactIcon />, 0.4],
  ["Top DBMS Interview Questions", <PyramidIcon />, 0.36],
  ["WhatsApp", <WhatsIcon />, 0.42],
  ["My Drive - Google Drive", <DriveIcon />, 0.53],
  ["New Tab", <GreyChromeIcon />, 0.4],
];

export default function App() {
  return (
    <Desktop>
      <GlobalStyle />
      <MenuBar>
        <AppleMark><FaApple /></AppleMark>
        <MenuItem $w={73} $bold $ls={0.05}>Chrome</MenuItem>
        {menus.map(([label, w, ls]) => (
          <MenuItem key={label} $w={w} $ls={ls}>{label}</MenuItem>
        ))}
        <StatusArea>
          <StatusSlot $w={33}>
            <svg width="17" height="17" viewBox="0 0 17 17">
              <rect x=".5" y=".5" width="16.500" height="16" rx="6" fill="#0a0c12" />
              <path d="M3.500 11V6.500M3.500 8c.2-1.600 2.500-1.600 2.500 0v3M6 8c.2-1.600 2.500-1.600 2.500 0L9.800 11M10.800 4.500V11M13.500 6.800L11 9l2.500 2M5.500 13.300c2 .8 4 .8 6 0" fill="none" stroke="#a9aebb" strokeWidth="1.200" />
            </svg>
          </StatusSlot>
          <StatusSlot $w={29}>
            <svg width="18" height="15" viewBox="0 0 18 15">
              <path d="M4 11.300H.7V1.200h16.600v10.100H14" fill="none" stroke="#08090e" strokeWidth="1.300" />
              <path d="M9 7.300l5.300 6.900H3.700z" fill="#08090e" />
            </svg>
          </StatusSlot>
          <StatusSlot $w={32}>
            <svg width="21" height="15" viewBox="0 0 21 15">
              <g fill="none" stroke="#08090e" strokeWidth="1.900">
                <path d="M.9 5.200a13.600 13.600 0 0 1 19.200 0" /><path d="M3.900 8.300a9.300 9.300 0 0 1 13.200 0" /><path d="M6.900 11.300a5.100 5.100 0 0 1 7.200 0" />
              </g>
              <path d="M10.500 14.800l-2-2.100a2.900 2.900 0 0 1 4 0z" fill="#08090e" />
            </svg>
          </StatusSlot>
          <StatusSlot $w={30} $size={12} $ls={-0.3}>46%</StatusSlot>
          <StatusSlot $w={42}>
            <svg width="23" height="12" viewBox="0 0 23 12">
              <rect x=".5" y=".5" width="19" height="11" rx="1.500" fill="none" stroke="#08090e" />
              <rect x="2" y="2" width="7.500" height="8" fill="#08090e" /><path d="M21 4q2 2 0 4z" fill="#08090e" stroke="#08090e" />
            </svg>
          </StatusSlot>
          <StatusSlot $w={107} $ls={-0.16}>Thu 6:00 AM</StatusSlot>
          <StatusSlot $w={32}>
            <svg width="15" height="15" viewBox="0 0 15 15"><g fill="none" stroke="#08090e" strokeWidth="1.300"><circle cx="6" cy="6" r="4.800" /><path d="M9.500 9.500l4.700 4.700" strokeWidth="1.600" /></g></svg>
          </StatusSlot>
          <StatusSlot $w={28}><SiriDot /></StatusSlot>
          <StatusSlot $w={30}>
            <svg width="18" height="12" viewBox="0 0 18 12"><path d="M0 1.500h2M4 1.500h11.500M0 6h2M4 6h11.500M0 10.500h2M4 10.500h14" stroke="#08090e" strokeWidth="1.800" /></svg>
          </StatusSlot>
        </StatusArea>
      </MenuBar>

      <Window>
        <TabStrip>
          <Lights>
            <Light $c="#ff5147" $b="#e5443c" />
            <Light $c="#ffb905" $b="#e2a51b" />
            <Light $c="#05cb2e" $b="#1bb334" />
          </Lights>
          {tabs.map(([title, icon, ls], i) => (
            <React.Fragment key={title}>
              <Tab $active={i === 0}>
                {icon}
                <TabTitle $ls={ls} $fade={i === 1}>{title}</TabTitle>
                <TabClose><CloseIcon /></TabClose>
              </Tab>
              {i > 0 && <TabDivider />}
            </React.Fragment>
          ))}
          <StripButton $ml={14} $s={18}>
            <svg viewBox="0 0 18 18"><path d="M9 3v12M3 9h12" stroke="currentColor" strokeWidth="1.800" /></svg>
          </StripButton>
          <StripButton $ml={107} $s={12}>
            <svg viewBox="0 0 12 12"><path d="M1.500 4l4.500 4.500L10.500 4" fill="none" stroke="currentColor" strokeWidth="1.800" /></svg>
          </StripButton>
        </TabStrip>

        <Toolbar>
          <NavButton><MdArrowBack /></NavButton>
          <NavButton><MdArrowForward /></NavButton>
          <NavButton $on><MdRefresh /></NavButton>
          <Omnibox>
            <MdInfoOutline />
            <Url><b>localhost</b>:3000</Url>
            <OmniIcons>
              <svg viewBox="0 0 16 16"><path d="M7 2H2.500Q1.700 2 1.700 2.800v8Q1.700 11.500 2.500 11.500h11q.8 0 .8-.7V9.500M11 1.500v6.500M8 5.500l3 3 3-3" fill="none" stroke="currentColor" strokeWidth="1.400" /><path d="M4 12h8v2.300H4z" fill="currentColor" /></svg>
              <svg viewBox="0 0 16 16"><path d="M5.500 5.500H3.200v9h9.600v-9h-2.300M8 10.500V1.800M5.500 4.200L8 1.700l2.500 2.500" fill="none" stroke="currentColor" strokeWidth="1.300" /></svg>
              <MdStarBorder />
            </OmniIcons>
          </Omnibox>
          <ToolIcons>
            <MdExtension />
            <svg viewBox="0 0 18 18"><path d="M2 2h14v14H2zM4 4v10h6.500V4z" fill="currentColor" fillRule="evenodd" /></svg>
            <Avatar>A</Avatar>
            <MdMoreVert />
          </ToolIcons>
        </Toolbar>

        <Bookmarks>
          {bookmarks.map(([label, w, icon, ls], i) => (
            <Bookmark key={i} $w={w} $ls={ls}>{icon}{label}</Bookmark>
          ))}
          <Overflow>
            <svg viewBox="0 0 10 16"><path d="M1.500 5l3 3-3 3M5.500 5l3 3-3 3" fill="none" stroke="#45494d" strokeWidth="1.400" /></svg>
          </Overflow>
        </Bookmarks>

        <Page><Heading>Welcome to my log-reader</Heading></Page>
      </Window>

      <Dock>
        <DockGroup items={apps} />
        <DockRule $top={16} $h={30} $ml={10} />
        <DockGroup items={recentApps} />
        <DockRule $top={8} $h={46} $ml={11} />
        <DockGroup items={stacks} />
      </Dock>
    </Desktop>
  );
}
